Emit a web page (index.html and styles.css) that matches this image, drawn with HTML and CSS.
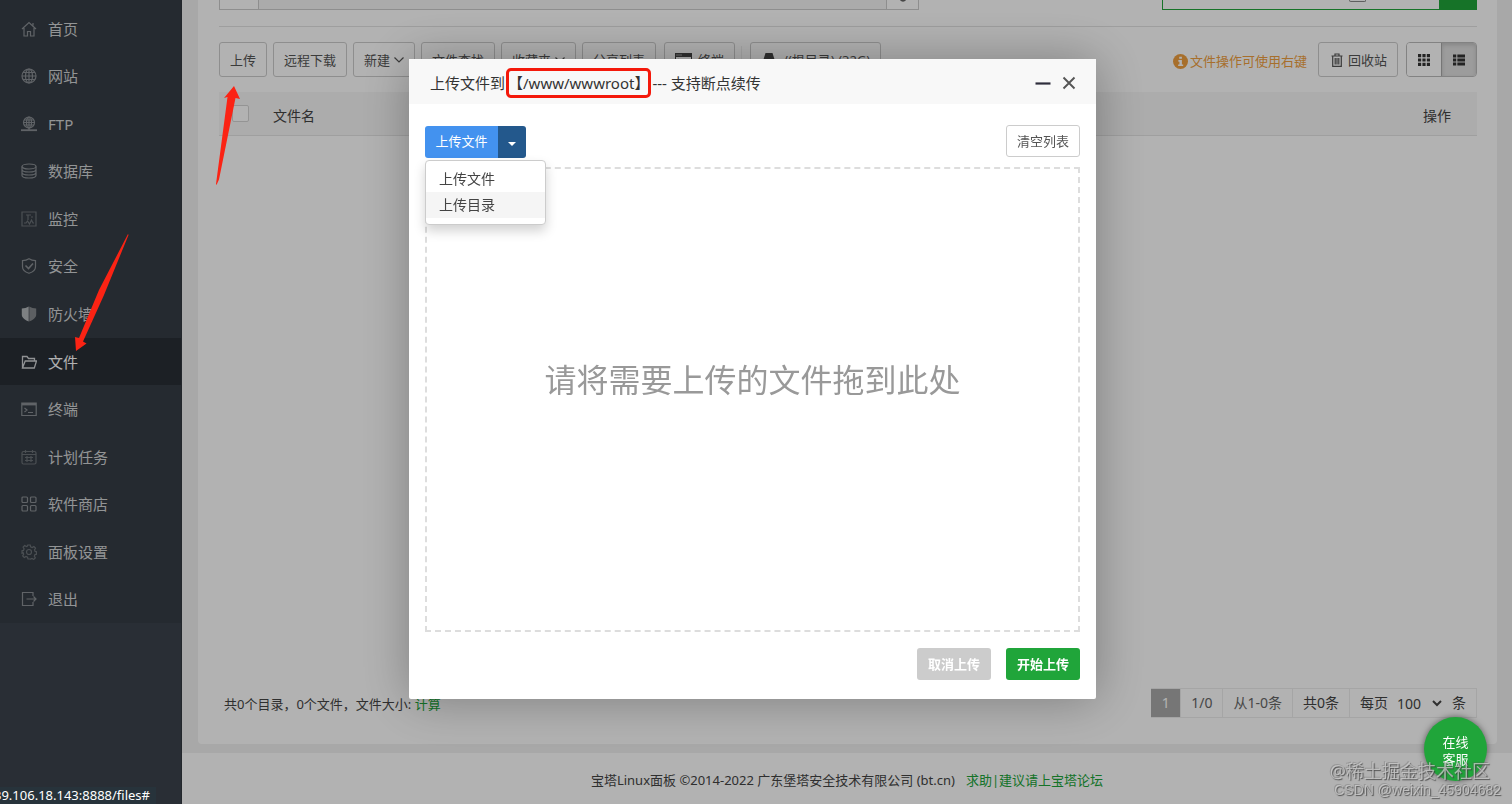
FILE: index.html
```html
<!DOCTYPE html>
<html lang="zh-CN">
<head>
<meta charset="utf-8">
<title>宝塔Linux面板</title>
<link rel="stylesheet" href="styles.css">
</head>
<body>
<div class="app">
  <nav class="sidebar">
    <ul class="menu">
      <li><a href="#"><svg class="ico" viewBox="0 0 16 16"><path d="M1 8 8 1.500 15 8M3 7v8h3.500v-4.500h3V15H13V7M12 4.500V2"/></svg>首页</a></li>
      <li><a href="#"><svg class="ico" viewBox="0 0 16 16"><circle cx="8" cy="8" r="7"/><ellipse cx="8" cy="8" rx="3.500" ry="7"/><path d="M1 8h14M2 4.500h12M2 11.500h12M8 1v14"/></svg>网站</a></li>
      <li><a href="#"><svg class="ico" viewBox="0 0 16 16"><circle cx="8" cy="6.500" r="5.500"/><ellipse cx="8" cy="6.500" rx="2.500" ry="5.500"/><path d="M2.500 6.500h11M3 4h10M3 9h10M8 1v13"/><path d="M0 14.200h16" stroke-width="1.800"/></svg>FTP</a></li>
      <li><a href="#"><svg class="ico" viewBox="0 0 16 16"><ellipse cx="8" cy="3.500" rx="7" ry="2.500"/><path d="M1 3.500v9c0 3.300 14 3.300 14 0v-9M1 6.500c0 3.300 14 3.300 14 0M1 9.500c0 3.300 14 3.300 14 0"/></svg>数据库</a></li>
      <li><a href="#"><svg class="ico faint" viewBox="0 0 16 16"><path d="M1 1h14v14H1zM3 12h2l1.500-2 2 3 2-4 1.500 3h1M5 4h5M7 4v5M10 6h2"/></svg>监控</a></li>
      <li><a href="#"><svg class="ico" viewBox="0 0 16 16"><path d="M8 .8C6 2.200 3.500 2.700 1.500 2.700v6C1.500 12 5 14.300 8 15.300c3-1 6.500-3.300 6.500-6.600v-6C12.500 2.700 10 2.200 8 .8z"/><path d="m4.500 7.500 3 3 4.500-5" stroke-width="1.600"/></svg>安全</a></li>
      <li><a href="#"><svg class="ico fill" viewBox="0 0 16 16"><path d="M7.700.5C6 1.700 3 2.500.8 2.500v6.200c0 3.300 4.200 5.800 6.900 6.800z"/><path class="dim" d="M8.300.5C10 1.700 13 2.500 15.200 2.500v6.200c0 3.300-4.200 5.800-6.900 6.800z"/></svg>防火墙</a></li>
      <li><a href="#" class="active"><svg class="ico" viewBox="0 0 16 16"><path d="M1.500 14V2.500H6l1.500 2h6V7M1.500 14h11.800L15.500 7H4.200L1.500 14z" stroke-width="1.300"/></svg>文件</a></li>
      <li><a href="#"><svg class="ico" viewBox="0 0 16 16"><path d="M.8 2h14.400v12.500H.8zM3.500 7l2.500 2-2.500 2M7 11.500h5"/><path d="M1 3.200h14" stroke-width="2.400"/></svg>终端</a></li>
      <li><a href="#"><svg class="ico faint" viewBox="0 0 16 16"><rect x="1" y="2.500" width="14" height="12.500" rx="1.500"/><path d="M1 5.500h14M4.500 1v3M11.500 1v3M4 8.500h8M4 11.500h8M6 7v6M10 7v6"/></svg>计划任务</a></li>
      <li><a href="#"><svg class="ico" viewBox="0 0 16 16"><rect x="1" y="1" width="5.500" height="5.500" rx="1"/><rect x="9.500" y="1" width="5.500" height="5.500" rx="1"/><rect x="1" y="9.500" width="5.500" height="5.500" rx="1"/><rect x="9.500" y="9.500" width="5.500" height="5.500" rx="1"/></svg>软件商店</a></li>
      <li><a href="#"><svg class="ico faint" viewBox="0 0 16 16"><path d="M6.800 1h2.400l.4 1.900 1.600.7 1.700-1 1.600 1.600-1 1.700.6 1.500 1.500.4v2.400l-1.600.4-.7 1.500 1 1.700-1.600 1.600-1.700-1-1.500.7L9 15H7l-.5-1.900-1.500-.7-1.700 1-1.600-1.600 1-1.700-.6-1.500L1 9.200V6.800l1.500-.4.600-1.500-1-1.700 1.600-1.600 1.700 1 1-.5z"/><circle cx="8" cy="8" r="2.500"/></svg>面板设置</a></li>
      <li><a href="#"><svg class="ico" viewBox="0 0 16 16"><path d="M12 5V1.500H1.500v13H12V11M5.500 8H15M12.500 5.500 15 8l-2.500 2.500"/></svg>退出</a></li>
    </ul>
  </nav>

  <div class="main">
    <section class="panel">
      <div class="pathrow">
        <div class="pathbox"><button class="back" aria-label="返回"></button><input class="path" aria-label="路径"><button class="refresh" aria-label="刷新"><svg viewBox="0 0 10 4"><path d="M1 0c2 3 6 3 8 0z"/></svg></button></div>
        <div class="search"><input class="term" aria-label="搜索"><input type="checkbox" class="sub" aria-label="包含子目录"><button class="go" aria-label="查找"></button></div>
      </div>
      <div class="tools">
        <button class="btn">上传</button>
        <button class="btn">远程下载</button>
        <button class="btn">新建<svg class="chev" viewBox="0 0 10 6"><path d="m.5.5 4.500 4.500L9.500.5"/></svg></button>
        <button class="btn">文件查找</button>
        <button class="btn">收藏夹<svg class="chev" viewBox="0 0 10 6"><path d="m.5.5 4.500 4.500L9.500.5"/></svg></button>
        <button class="btn">分享列表</button>
        <button class="btn term-btn"><svg class="tico" viewBox="0 0 17 14"><path d="M0 0h17v14H0zM1 4v9h15V4z" fill-rule="evenodd"/><path class="ln" d="m3 6 2.500 2L3 10M7 10.500h4"/><path class="dots" d="M1.500 2H7"/></svg>终端</button>
        <span class="sep"></span>
        <button class="btn disk"><svg class="dico" viewBox="0 0 12 14"><path d="M2.500 0h7L12 8v4a2 2 0 0 1-2 2H2a2 2 0 0 1-2-2V8z"/></svg>/(根目录) (32G)</button>
        <span class="hint"><svg viewBox="0 0 14 14"><circle cx="7" cy="7" r="7"/><path d="M5.800 2.500h2.500v2H5.800zM5 5.700h3.300v4H9.500v1.600H4.800V9.700h1.200V7.300H5z"/></svg>文件操作可使用右键</span>
        <button class="btn recycle"><svg class="bin" viewBox="0 0 12 14"><path d="M.5 3h11M4 3V1h4v2M1.700 3v10.300h8.600V3M4.200 5v6.500M6 5v6.500M7.800 5v6.500"/></svg>回收站</button>
        <span class="views"><button aria-label="图标视图"><svg viewBox="0 0 12 12"><path d="M0 0h3.200v3.200H0zM4.400 0h3.200v3.200H4.400zM8.800 0H12v3.200H8.800zM0 4.400h3.200v3.200H0zM4.400 4.400h3.200v3.200H4.400zM8.800 4.400H12v3.200H8.800zM0 8.800h3.200V12H0zM4.400 8.800h3.200V12H4.400zM8.800 8.800H12V12H8.800z"/></svg></button><button class="on" aria-label="列表视图"><svg viewBox="0 0 13 12"><path d="M0 0h3.500v3.200H0zM4.700 0H13v3.200H4.700zM0 4.400h3.500v3.200H0zM4.700 4.400H13v3.200H4.700zM0 8.800h3.500V12H0zM4.700 8.800H13V12H4.700z"/></svg></button></span>
      </div>
      <table class="files">
        <thead><tr><th class="c-check"><input type="checkbox" aria-label="全选"></th><th>文件名</th><th class="c-op">操作</th></tr></thead>
      </table>
      <div class="listfoot">
        <span class="sum">共0个目录，0个文件，文件大小: <a href="#">计算</a></span>
        <div class="pager"><span class="cur">1</span><span>1/0</span><span>从1-0条</span><span class="dark">共0条</span><label class="dark">每页<select><option>100</option></select>条</label></div>
      </div>
    </section>
    <footer class="foot">宝塔Linux面板 ©2014-2022 广东堡塔安全技术有限公司 (bt.cn)<a href="#">求助|建议请上宝塔论坛</a></footer>
  </div>
</div>

<div class="shade">
  <div class="dialog" role="dialog" aria-labelledby="dlg-title">
    <header class="dhead">
      <h1 id="dlg-title">上传文件到<mark>【/www/wwwroot】</mark>--- 支持断点续传</h1>
      <button class="win" aria-label="最小化"><svg viewBox="0 0 16 16"><path d="M.5 8.500h15" stroke-width="2.200"/></svg></button>
      <button class="win close" aria-label="关闭"><svg viewBox="0 0 16 16"><path d="m2.500 2.500 11 11M13.500 2.500l-11 11" stroke-width="1.900"/></svg></button>
    </header>
    <div class="dbody">
      <div class="dbar">
        <div class="split">
          <button class="up">上传文件</button><button class="caret" aria-label="更多"><svg viewBox="0 0 8 4"><path d="M0 0h8L4 4z"/></svg></button>
          <ul class="drop"><li><a href="#">上传文件</a></li><li><a href="#" class="hover">上传目录</a></li></ul>
        </div>
        <button class="clear">清空列表</button>
      </div>
      <div class="zone">请将需要上传的文件拖到此处</div>
      <div class="dfoot"><button class="cancel">取消上传</button><button class="start">开始上传</button></div>
    </div>
  </div>
</div>

<button class="service">在线<br>客服</button>
<div class="status">39.106.18.143:8888/files#</div>
<svg class="arrow a1" viewBox="0 0 28 100"><path d="m19 1 6 13-4.500-1L4 94.500 1.500 100l-.500-1L12.500 12 9 13z"/></svg>
<svg class="arrow a2" viewBox="0 0 56 120"><path d="M54 1 25 57 5 105 1 104l1 14 10.500-7.500L9 108.500 30 62 54.500 2z"/></svg>
<div class="wm wm-big">@稀土掘金技术社区</div>
<div class="wm wm-small">CSDN @weixin_45904682</div>
</body>
</html>
```

FILE: styles.css
```css
* { box-sizing: border-box; }
body {
  margin: 0;
  font: 13px/20px "Noto Sans", "Noto Sans CJK SC", sans-serif;
  color: #444;
  background: #f1f1f1;
  overflow: hidden;
}
button, input, select { font: inherit; color: inherit; margin: 0; }
button { cursor: pointer; white-space: nowrap; }
a { color: #20a53a; text-decoration: none; }
ul { list-style: none; margin: 0; padding: 0; }
svg { flex: none; }

.app { display: grid; grid-template-columns: 182px 1fr; min-height: 100vh; }

/* sidebar */
.sidebar { background: #3c424d; border-right: 1px solid #33383f; }
.menu {
  display: grid;
  grid-auto-rows: 1fr;
  height: 623px;
  padding-top: 5px;
  background: #363d45;
}
.menu a {
  display: flex;
  align-items: center;
  gap: 11px;
  height: 100%;
  padding-left: 21px;
  font-size: 15px;
  color: #d2d4d6;
}
.menu a.active { background: #292e36; color: #fff; }
.ico { width: 16px; height: 16px; fill: none; stroke: #8a8f94; stroke-width: 1.2; }
.ico.fill { fill: #b4b8bb; stroke: none; }
.ico .dim { fill: #85898d; }
.ico.faint { stroke: #6c7278; }
.active .ico { stroke: #cfd2d4; }

/* file manager */
.main { display: flex; flex-direction: column; min-width: 0; }
.panel {
  flex: 1;
  display: flex;
  flex-direction: column;
  margin: 0 15px 9px 16px;
  padding: 0 20px 26px 21px;
  background: #fff;
  border-radius: 0 0 4px 4px;
}
.pathrow {
  display: flex;
  justify-content: space-between;
  height: 27px;
  padding-bottom: 16px;
  border-bottom: 1px solid #e2e2e2;
}
.pathbox { display: flex; width: 700px; border: 1px solid #ccc; border-top: 0; }
.pathbox button, .pathbox input { border: 0; padding: 0; background: #fff; }
.pathbox .back { width: 39px; border-right: 1px solid #ccc; }
.pathbox .path { flex: 1; min-width: 0; background: #f5f5f5; }
.pathbox .refresh { display: flex; justify-content: center; width: 32px; border-left: 1px solid #ccc; }
.refresh svg { width: 8px; height: 3px; fill: #666; }
.search { display: flex; width: 315px; border: 1px solid #20a53a; border-top: 0; }
.search .term { flex: 1; min-width: 0; border: 0; padding: 0; background: transparent; }
.search .sub { appearance: none; width: 17px; height: 2px; margin-right: 73px; border: 1px solid #888; border-top: 0; border-radius: 0 0 3px 3px; }
.search .go { width: 37px; border: 0; padding: 0; background: #20a53a; }

.tools { display: flex; align-items: center; gap: 6px; padding: 15px 0; }
.btn {
  display: flex;
  align-items: center;
  height: 35px;
  padding: 0 10px;
  border: 1px solid #ccc;
  border-radius: 3px;
  background: #fff;
  color: #555;
}
.chev { width: 10px; height: 6px; margin-left: 4px; fill: none; stroke: #555; stroke-width: 1.2; }
.term-btn { margin-left: 2px; }
.tico { width: 17px; height: 14px; margin-right: 6px; fill: #444; }
.tico .ln { fill: none; stroke: #444; }
.tico .dots { stroke: #fff; stroke-dasharray: 1 1; }
.sep { width: 1px; height: 28px; background: #eee; }
.disk { margin-left: 2px; }
.dico { width: 12px; height: 14px; margin: 0 8px 0 2px; fill: #444; }
.hint { display: flex; align-items: center; gap: 2px; margin-left: auto; color: #f0a040; white-space: nowrap; padding-top: 3px; }
.hint svg { width: 15px; height: 15px; fill: #f0a040; }
.hint path { fill: #fff; }
.recycle { margin-left: 5px; padding-left: 12px; }
.bin { width: 12px; height: 14px; margin-right: 5px; fill: none; stroke: #555; stroke-width: 1.2; }
.views { display: flex; margin-left: 2px; border: 1px solid #bbb; border-radius: 4px; overflow: hidden; }
.views button { display: flex; align-items: center; justify-content: center; width: 34px; height: 33px; padding: 0; border: 0; background: #fff; }
.views .on { width: 35px; background: #e0e0e0; border-left: 1px solid #aaa; box-shadow: inset 0 2px 4px rgba(0, 0, 0, .15); }
.views svg { width: 12px; height: 12px; fill: #333; }

.files { width: 100%; border-collapse: collapse; table-layout: fixed; }
.files th {
  height: 43px;
  padding: 5px 0 0;
  font-weight: 400;
  font-size: 14px;
  text-align: left;
  color: #444;
  background: #f6f6f6;
  border-bottom: 1px solid #e4e4e4;
}
.files .c-check { width: 54px; padding: 0 0 0 13px; }
.files .c-check input { display: block; appearance: none; width: 17px; height: 17px; border: 1px solid #d5d5d5; border-radius: 2px; background: #fff; }
.files .c-op { width: 54px; }

.listfoot { display: flex; align-items: center; justify-content: space-between; margin-top: auto; }
.sum { padding-left: 5px; color: #444; padding-top: 2px; }
.pager { display: flex; font-size: 14px; color: #666; border: 1px solid #ececec; border-left: 0; }
.pager > * { display: flex; align-items: center; height: 28px; padding: 0 10px; border-right: 1px solid #ececec; }
.pager > :last-child { border-right: 0; }
.pager .cur { width: 30px; justify-content: center; background: #aaa; color: #fff; }
.pager .dark { color: #444; }
.pager select { width: 52px; margin: 0 7px 0 5px; padding: 0; border: 0; background: #fff; }

.foot { display: flex; justify-content: center; gap: 11px; padding: 17px 0 14px; background: #fff; color: #444; }

/* dialog */
.shade {
  position: fixed;
  inset: 0;
  display: flex;
  justify-content: center;
  align-items: flex-start;
  padding: 59px 7px 0 0;
  background: rgba(0, 0, 0, .3);
}
.dialog { width: 687px; background: #fff; border-radius: 2px; box-shadow: 1px 1px 50px rgba(0, 0, 0, .3); }
.dhead { display: flex; align-items: center; gap: 10px; height: 45px; padding: 2px 19px 0 21px; background: #f8f8f8; }
.dhead h1 { flex: 1; display: flex; align-items: center; margin: 0; font-size: 15px; font-weight: 400; color: #333; }
.dhead mark {
  margin: 0 3px;
  padding: 2px 0;
  line-height: 22px;
  outline: 3px solid #f4190b;
  outline-offset: -1px;
  border-radius: 3px;
  background: none;
  color: #333;
}
.win { display: flex; padding: 0; border: 0; background: none; }
.win svg { width: 16px; height: 16px; fill: none; stroke: #2e2d3c; }
.win.close svg { stroke: #555; }
.dbody { padding: 21px 16px 19px; }
.dbar { display: flex; justify-content: space-between; margin-bottom: 9px; }
.split { position: relative; display: flex; padding-top: 1px; }
.split button { height: 32px; border: 0; color: #fff; }
.split .up { width: 73px; padding: 0 0 2px; background: #4392ef; border-radius: 3px 0 0 3px; }
.split .caret { width: 28px; padding: 0; background: #23588c; border-radius: 0 3px 3px 0; }
.caret svg { width: 8px; height: 4px; fill: #fff; vertical-align: middle; }
.drop {
  position: absolute;
  left: 0;
  top: 35px;
  width: 121px;
  padding: 5px 0 6px;
  background: #fff;
  border: 1px solid #ccc;
  border-radius: 4px;
  box-shadow: 0 6px 12px rgba(0, 0, 0, .18);
}
.drop a { display: block; padding: 0 13px; font-size: 14px; line-height: 26px; color: #444; }
.drop .hover { background: #f5f5f5; }
.clear { width: 74px; height: 32px; padding: 0; border: 1px solid #ccc; border-radius: 3px; background: #fff; color: #555; }
.zone {
  display: flex;
  justify-content: center;
  align-items: center;
  height: 465px;
  padding-bottom: 40px;
  border: 2px dashed #ddd;
  font-size: 32px;
  line-height: 40px;
  color: #999;
}
.dfoot { display: flex; justify-content: flex-end; gap: 15px; margin-top: 16px; }
.dfoot button { width: 74px; height: 32px; padding: 0; border: 0; border-radius: 3px; font-weight: 700; color: #fff; }
.dfoot .cancel { background: #ccc; }
.dfoot .start { background: #20a53a; }

/* floating layers */
.service {
  position: fixed;
  right: 25px;
  bottom: 23px;
  width: 63px;
  height: 64px;
  padding: 3px 0 0;
  border: 0;
  border-radius: 50%;
  background: #20a53a;
  color: #fff;
  line-height: 17px;
  box-shadow: 0 0 6px rgba(0, 0, 0, .5);
}
.status {
  position: fixed;
  left: 0;
  bottom: 0;
  display: flex;
  justify-content: flex-end;
  width: 156px;
  padding-right: 6px;
  overflow: hidden;
  font-size: 13px;
  line-height: 17px;
  background: #27333b;
  color: #fff;
}
.arrow { position: fixed; fill: #fb2314; }
.a1 { left: 215px; top: 85px; width: 28px; height: 100px; }
.a2 { left: 74px; top: 233px; width: 56px; height: 120px; }
.wm { position: fixed; white-space: nowrap; pointer-events: none; color: rgba(205, 205, 205, .75); text-shadow: 1px 1px 1px rgba(60, 60, 60, .8), -1px -1px 0 rgba(90, 90, 90, .3); }
.wm-big { right: 22px; bottom: 21px; font-size: 18px; line-height: 24px; }
.wm-small { right: 11px; bottom: 5px; font: 14px/18px "Liberation Sans", sans-serif; }
```
